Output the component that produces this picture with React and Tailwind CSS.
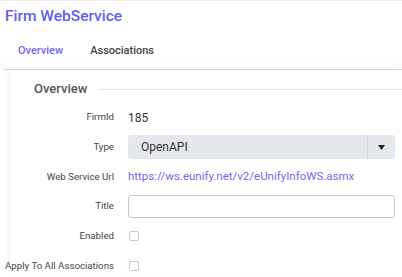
import React from "react";

function Row({ label, children, className = "", labelClass = "" }) {
  return (
    <div className={`flex ${className}`}>
      <div className={`w-[114px] shrink-0 whitespace-nowrap text-right text-[9.7px] text-[#444] ${labelClass}`}>
        {label}
      </div>
      <div className="ml-[14px] flex-1 pr-[7px]">{children}</div>
    </div>
  );
}

function Checkbox() {
  return <div className="ml-[1px] h-[10px] w-[10px] rounded-[2px] border border-[#c9c9c9] bg-white" />;
}

export default function App() {
  return (
    <div
      className="h-[277px] w-[402px] overflow-hidden bg-white"
      style={{ fontFamily: 'Roboto, "Open Sans", sans-serif' }}
    >
      <div className="border-t border-[#ececec] bg-gradient-to-b from-white from-80% to-[#fafafa]">
        <h1 className="pl-[5px] pt-[4px] text-[15.5px] font-medium leading-[22px] text-[#5d5ff2]">
          Firm WebService
        </h1>
        <div className="flex h-[42px] items-center gap-[27px] pl-[18px] pt-[7px] text-[11px] font-medium">
          <span className="text-[#7367f0]">Overview</span>
          <span className="text-[#444]">Associations</span>
        </div>
      </div>
      <div className="ml-[4px] h-[1px] bg-[#d6d6d6]" />
      <div className="ml-[10px] shadow-[-3px_0_4px_-2px_rgba(0,0,0,0.08)]">
        <div className="flex items-center pt-[10px]">
          <span className="ml-[24px] text-[13px] font-medium leading-[18px] text-[#555]">Overview</span>
          <div className="ml-[12px] h-[1px] flex-1 bg-[#dbe1ee]" />
        </div>
        <div className="-ml-[10px] mt-[9px] flex flex-col">
          <Row label="FirmId" className="h-[20px] items-center">
            <span className="text-[12px] text-[#333]">185</span>
          </Row>
          <Row label="Type" className="mt-[8px] h-[24px] items-center">
            <div className="flex h-[24px] items-center rounded-[3px] bg-[#e4e7eb]">
              <span className="flex-1 pl-[13px] text-[12px] text-[#333]">OpenAPI</span>
              <div className="h-full w-[1px] bg-[#cfd3d8]" />
              <div className="flex w-[27px] justify-center">
                <svg width="7" height="5" viewBox="0 0 7 5">
                  <path d="M0 0h7L3.5 5z" fill="#222" />
                </svg>
              </div>
            </div>
          </Row>
          <Row label="Web Service Url" className="mt-[4px] h-[24px]" labelClass="pt-[8px] leading-[12px]">
            <span className="text-[11.5px] leading-[14px] text-[#7367f0]">
              https://ws.eunify.net/v2/eUnifyInfoWS.asmx
            </span>
          </Row>
          <Row label="Title" className="mt-[8px] h-[23px] items-center">
            <div className="h-[23px] rounded-[3px] border border-[#c8c8c8] bg-white" />
          </Row>
          <Row label="Enabled" className="mt-[8px] h-[20px] items-center">
            <Checkbox />
          </Row>
          <Row label="Apply To All Associations" className="mt-[10px] h-[20px] items-center">
            <Checkbox />
          </Row>
        </div>
      </div>
    </div>
  );
}
